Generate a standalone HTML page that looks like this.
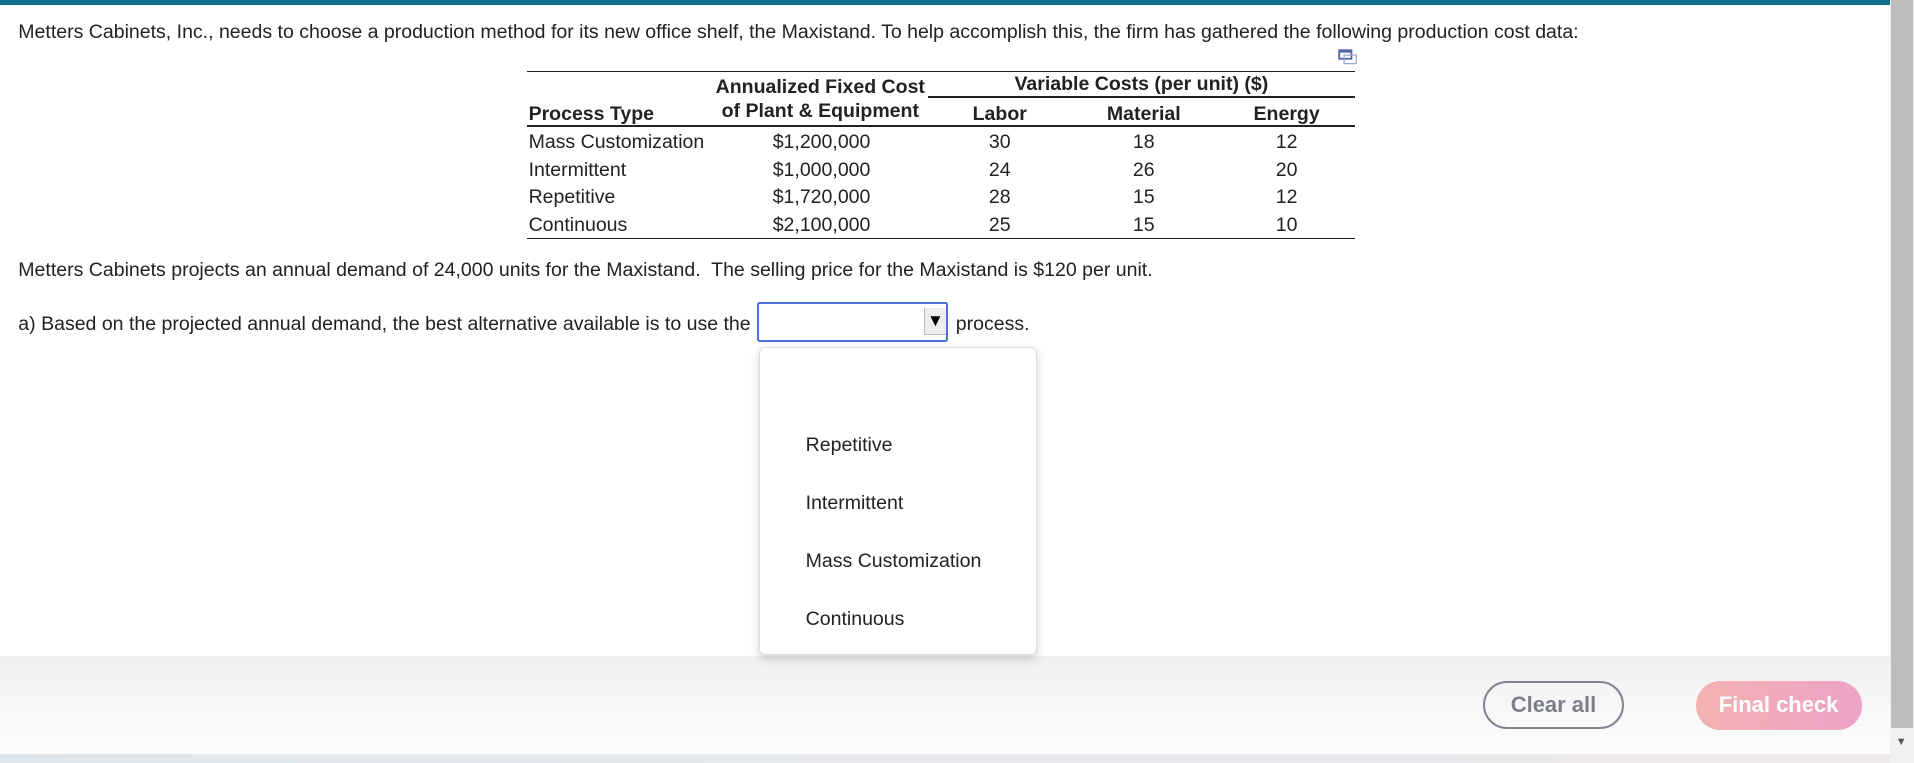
<!DOCTYPE html>
<html><head><meta charset="utf-8"><style>
html,body{margin:0;padding:0;width:1914px;height:763px;overflow:hidden;background:#fff}
#w{position:absolute;left:0;top:0;width:1568px;height:625px;zoom:1.2207;font-family:"Liberation Sans",Arial,sans-serif;color:#222;font-size:16px}
.a{position:absolute;white-space:nowrap;line-height:18px}
.b{font-weight:bold}
.c{transform:translateX(-50%)}
.l{position:absolute;background:#222;height:1px}
</style></head><body><div id="w">
<div style="position:absolute;left:0;top:0;width:1548px;height:4px;background:#0f6f8f"></div>
<div style="position:absolute;left:1548px;top:0;width:20px;height:625px;background:#f1f1f1"></div>
<div style="position:absolute;left:1549px;top:0;width:18px;height:596px;background:#bdbdbd"></div>
<div class="a" style="left:1553px;top:600px;font-size:9px;color:#555">&#9660;</div>
<div class="a" style="left:15px;top:18px">Metters Cabinets, Inc., needs to choose a production method for its new office shelf, the Maxistand. To help accomplish this, the firm has gathered the following production cost data:</div>
<svg style="position:absolute;left:1096px;top:40px" width="16" height="14"><rect x="1" y="1" width="10" height="7" fill="#fff" stroke="#5566aa" stroke-width="1.5"/><rect x="5" y="5" width="10" height="7" fill="none" stroke="#9aa6cc" stroke-width="1"/><rect x="1" y="1" width="10" height="2" fill="#5566aa"/></svg>
<div class="l" style="left:432px;top:58px;width:678px"></div>
<div class="l" style="left:760px;top:79px;width:350px"></div>
<div class="l" style="left:432px;top:102px;width:678px;height:2px"></div>
<div class="l" style="left:432px;top:195px;width:678px"></div>
<div class="a b c" style="left:672px;top:63px">Annualized Fixed Cost</div>
<div class="a b c" style="left:935px;top:61px">Variable Costs (per unit) ($)</div>
<div class="a b" style="left:433px;top:85px">Process Type</div>
<div class="a b c" style="left:672px;top:83px">of Plant &amp; Equipment</div>
<div class="a b c" style="left:819px;top:85px">Labor</div>
<div class="a b c" style="left:937px;top:85px">Material</div>
<div class="a b c" style="left:1054px;top:85px">Energy</div>
<div class="a" style="left:433px;top:108px">Mass Customization</div>
<div class="a" style="left:433px;top:131px">Intermittent</div>
<div class="a" style="left:433px;top:153px">Repetitive</div>
<div class="a" style="left:433px;top:176px">Continuous</div>
<div class="a" style="left:633px;top:108px">$1,200,000</div>
<div class="a" style="left:633px;top:131px">$1,000,000</div>
<div class="a" style="left:633px;top:153px">$1,720,000</div>
<div class="a" style="left:633px;top:176px">$2,100,000</div>
<div class="a c" style="left:819px;top:108px">30</div><div class="a c" style="left:937px;top:108px">18</div><div class="a c" style="left:1054px;top:108px">12</div>
<div class="a c" style="left:819px;top:131px">24</div><div class="a c" style="left:937px;top:131px">26</div><div class="a c" style="left:1054px;top:131px">20</div>
<div class="a c" style="left:819px;top:153px">28</div><div class="a c" style="left:937px;top:153px">15</div><div class="a c" style="left:1054px;top:153px">12</div>
<div class="a c" style="left:819px;top:176px">25</div><div class="a c" style="left:937px;top:176px">15</div><div class="a c" style="left:1054px;top:176px">10</div>
<div class="a" style="left:15px;top:213px">Metters Cabinets projects an annual demand of 24,000 units for the Maxistand.&nbsp; The selling price for the Maxistand is $120 per unit.</div>
<div class="a" style="left:15px;top:257px">a) Based on the projected annual demand, the best alternative available is to use the</div>
<div style="position:absolute;left:620px;top:247px;width:153px;height:30px;border:2px solid #4a72d8;border-radius:2px;background:#fff"></div>
<div style="position:absolute;left:757px;top:252px;width:17px;height:22px;background:#eee;border-left:1px solid #bbb;border-bottom:1px solid #bbb;font-size:14px;line-height:22px;text-align:center;color:#000">&#9660;</div>
<div class="a" style="left:783px;top:257px">process.</div>
<div style="position:absolute;left:0;top:537px;width:1548px;height:81px;background:linear-gradient(#f0f0f0,#fdfdfd)"></div>
<div style="position:absolute;left:0;top:618px;width:1548px;height:7px;background:linear-gradient(90deg,#dfe8ee,#eee8ec)"></div>
<div style="position:absolute;left:622px;top:284px;width:226px;height:251px;background:#fff;border:1px solid #ddd;border-radius:5px;box-shadow:0 3px 8px rgba(0,0,0,.18)"></div>
<div class="a" style="left:660px;top:356px">Repetitive</div>
<div class="a" style="left:660px;top:404px">Intermittent</div>
<div class="a" style="left:660px;top:451px">Mass Customization</div>
<div class="a" style="left:660px;top:499px">Continuous</div>
<div style="position:absolute;left:1215px;top:558px;width:112px;height:36px;border:2px solid #80858f;border-radius:20px;color:#7a7f8a;font-weight:bold;font-size:18px;line-height:36px;text-align:center">Clear all</div>
<div style="position:absolute;left:1389px;top:558px;width:136px;height:40px;border-radius:20px;background:linear-gradient(100deg,#f2b2b0,#eda2c8);color:#fff;font-weight:bold;font-size:18px;line-height:40px;text-align:center">Final check</div>
</div></body></html>
